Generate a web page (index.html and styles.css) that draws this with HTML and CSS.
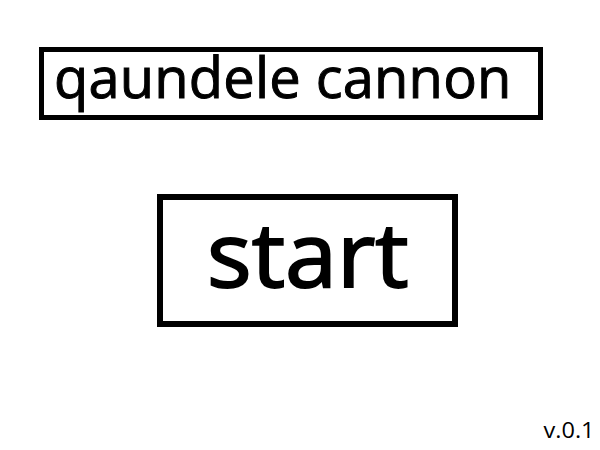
FILE: index.html
```html
<!DOCTYPE html>
<html lang="en">
<head>
    <meta charset="UTF-8">
    <title>qaundele cannon</title>
    <link rel="stylesheet" href="styles.css">
</head>
<body>
    <div class="menu">
        <div class="title-box"><span class="title-text">qaundele cannon</span></div>
        <button class="start-button"><span class="start-text">start</span></button>
        <div class="version"><span class="version-text">v.0.1</span></div>
    </div>
</body>
</html>
```

FILE: styles.css
```css
body {
    margin: 0;
    background: white;
    color: black;
    font-family: "Open Sans", sans-serif;
}

.menu {
    width: 600px;
    height: 450px;
    display: flex;
    flex-direction: column;
    box-sizing: border-box;
    padding: 47px 0 0 39px;
}

.title-box {
    width: 504px;
    height: 73px;
    box-sizing: border-box;
    border: 5px solid black;
    padding-left: 10px;
}

/* heavy strokes on the lettering */
.title-text {
    font-size: 56px;
    line-height: 48px;
    -webkit-text-stroke: 1px black;
    letter-spacing: 0.2px;
}

.start-button {
    align-self: flex-start;
    display: flex;
    justify-content: center;
    align-items: center;
    margin: 74px 0 0 118px;
    width: 301px;
    height: 133px;
    box-sizing: border-box;
    border: 6px solid black;
    background: white;
    padding: 0 0 17px 0;
}

.start-text {
    display: inline-block;
    font-family: "Open Sans", sans-serif;
    font-size: 90px;
    line-height: 90px;
    -webkit-text-stroke: 2px black;
    transform: scaleX(1.04);
}

.version {
    align-self: flex-end;
    margin: 91px 5px 0 0;
}

.version-text {
    display: inline-block;
    font-size: 21px;
    line-height: 24px;
    transform: scaleX(1.12);
    transform-origin: right center;
}
```
